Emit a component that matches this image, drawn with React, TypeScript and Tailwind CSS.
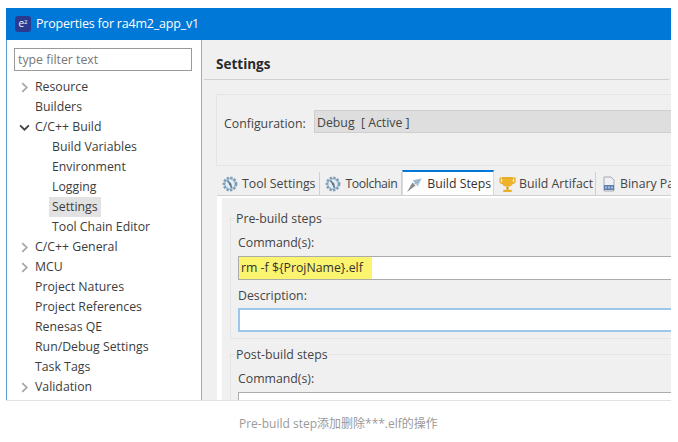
import React from "react";

function Chevron({ open }: { open?: boolean }) {
  return (
    <svg width="11" height="11" viewBox="0 0 10 10" className="shrink-0">
      {open ? (
        <path d="M1 3 L5 7 L9 3" fill="none" stroke="#404040" strokeWidth="1.6" />
      ) : (
        <path d="M3 1 L7 5 L3 9" fill="none" stroke="#a6a6a6" strokeWidth="1.6" />
      )}
    </svg>
  );
}

const tree: { label: string; level: number; arrow?: "open" | "closed"; selected?: boolean }[] = [
  { label: "Resource", level: 0, arrow: "closed" },
  { label: "Builders", level: 0 },
  { label: "C/C++ Build", level: 0, arrow: "open" },
  { label: "Build Variables", level: 1 },
  { label: "Environment", level: 1 },
  { label: "Logging", level: 1 },
  { label: "Settings", level: 1, selected: true },
  { label: "Tool Chain Editor", level: 1 },
  { label: "C/C++ General", level: 0, arrow: "closed" },
  { label: "MCU", level: 0, arrow: "closed" },
  { label: "Project Natures", level: 0 },
  { label: "Project References", level: 0 },
  { label: "Renesas QE", level: 0 },
  { label: "Run/Debug Settings", level: 0 },
  { label: "Task Tags", level: 0 },
  { label: "Validation", level: 0, arrow: "closed" },
];

function Gear() {
  return (
    <svg width="16" height="16" viewBox="0 0 16 16" className="shrink-0">
      <circle cx="8" cy="8" r="6.2" fill="#a9c4d8" stroke="#7f9db5" strokeWidth="2.4" strokeDasharray="2.2 1.4" />
      <circle cx="8" cy="8" r="4.4" fill="#e6edf2" />
      <path d="M5.5 4.5 L8.5 8.5 L9.5 12" fill="none" stroke="#6b7f92" strokeWidth="1.8" />
      <circle cx="8" cy="8" r="1.2" fill="#5f7487" />
    </svg>
  );
}

function Tab({ icon, label, active, last, spacing }: { icon: React.ReactNode; label: string; active?: boolean; last?: boolean; spacing: string }) {
  return active ? (
    <div className={`flex items-center h-[25px] pt-[1px] bg-white border-t-2 border-t-[#0078d7] border-x border-x-[#d9d9d9] text-[#333] ${spacing}`}>
      {icon}
      <span>{label}</span>
    </div>
  ) : (
    <div className={`flex items-center h-[23px] pt-[1px] text-[#444] ${spacing} ${last ? "" : "border-r border-[#d0d0d0]"}`}>
      {icon}
      <span>{label}</span>
    </div>
  );
}

function Legend({ children }: { children: React.ReactNode }) {
  return <div className="absolute -top-[9px] left-[4px] px-[1px] bg-[#f0f0f0] leading-[17px] text-[#444]">{children}</div>;
}

export default function App() {
  return (
    <div
      className="w-[678px] h-[442px] bg-white flex flex-col overflow-hidden text-[12.3px] text-[#3c3c3c]"
      style={{ fontFamily: '"Open Sans", "Noto Sans CJK SC", sans-serif' }}
    >
      <div className="ml-[6px] mt-[8px] w-[665px] h-[393px] flex flex-col overflow-hidden border-b border-b-[#e2e2e2]">
        {/* Title bar */}
        <div className="h-[32px] shrink-0 bg-[#0078d7] flex items-center pl-[9px] gap-[5px] text-white text-[12.5px] tracking-[-0.2px]">
          <div className="w-[16px] h-[16px] shrink-0 rounded-[3px] bg-[#2b3a8f] text-white text-[10px] leading-[14px] text-center tracking-normal">
            e<sup className="text-[6px]">2</sup>
          </div>
          <span>Properties for ra4m2_app_v1</span>
        </div>

        <div className="flex-1 flex min-h-0">
          {/* Left tree */}
          <div className="w-[196px] shrink-0 bg-white border-l border-l-[#5a9bd0] border-r border-r-[#a8a8a8] pt-[8px] pl-[7px] pr-[9px]">
            <div className="h-[23px] border border-[#9a9a9a] flex items-center pl-[3px] pt-[2px] text-[#777]">type filter text</div>
            <div className="mt-[6px]">
              {tree.map((t) => (
                <div key={t.label} className="h-[20px] flex items-center text-[#3c3c3c]">
                  <div className="w-[21px] flex justify-center shrink-0">
                    {t.arrow && <Chevron open={t.arrow === "open"} />}
                  </div>
                  {t.level === 1 ? (
                    <div className={`ml-[14px] px-[3px] h-[20px] leading-[20px] ${t.selected ? "bg-[#e2e2e2]" : ""}`}>{t.label}</div>
                  ) : (
                    <div className="leading-[20px]">{t.label}</div>
                  )}
                </div>
              ))}
            </div>
          </div>

          {/* Right */}
          <div className="flex-1 min-w-0 bg-[#f0f0f0] flex flex-col overflow-hidden">
            <div className="h-[40px] shrink-0 mx-[2px] border-b border-[#d0d0d0] flex items-center pl-[12px] pt-[9px] font-bold text-[13.5px] text-[#2a2a2a]">Settings</div>
            <div className="ml-[14px] mt-[14px] h-[72px] shrink-0 border border-[#e4e4e4] border-r-0 flex items-start pt-[15px] pl-[7px]">
              <div className="w-[90px] h-[24px] pt-[2px] leading-[24px] text-[#444]">Configuration:</div>
              <div className="flex-1 h-[23px] bg-[#dedede] border border-[#cfcfcf] border-r-0 pl-[2px] pt-[1px] leading-[21px] text-[#444]">Debug&nbsp; [ Active ]</div>
            </div>

            {/* Tabs */}
            <div className="ml-[15px] mt-[5px] shrink-0 flex items-end whitespace-nowrap h-[25px] border-b border-b-[#d0d0d0]">
              <Tab spacing="pl-[5px] gap-[4px] pr-[4px]" icon={<Gear />} label="Tool Settings" />
              <Tab spacing="pl-[5px] gap-[4px] pr-[4px] tracking-[-0.42px]" icon={<Gear />} label="Toolchain" />
              <Tab
                active
                spacing="pl-[3px] gap-[4px] pr-[2px]"
                label="Build Steps"
                icon={
                  <svg width="17" height="17" viewBox="0 0 16 16" className="shrink-0">
                    <path d="M1 15 L6 6 L9 9 Z" fill="#8c8c8c" />
                    <path d="M6 4 L15 2 L11 10 Z" fill="#b4cadb" />
                    <path d="M8 5 L13 4 M8 7 L12 6" stroke="#7fa0b8" strokeWidth="0.8" />
                  </svg>
                }
              />
              <Tab
                spacing="pl-[5px] gap-[3px] pr-[2px]"
                label="Build Artifact"
                icon={
                  <svg width="17" height="17" viewBox="0 0 16 16" className="shrink-0">
                    <path d="M3 1 H13 V6 Q13 10 8 10 Q3 10 3 6 Z" fill="#eeb32a" />
                    <path d="M1 2 H15 V5 Q15 7 12 7 M4 7 Q1 7 1 5 V2" fill="none" stroke="#e8ab24" strokeWidth="1.3" />
                    <rect x="7" y="10" width="2" height="3" fill="#d9991b" />
                    <rect x="4" y="13" width="8" height="2" fill="#e8ab24" />
                  </svg>
                }
              />
              <Tab
                last
                spacing="pl-[5px] gap-[3px] pr-[2px]"
                label="Binary Pa"
                icon={
                  <svg width="16" height="16" viewBox="0 0 16 16" className="shrink-0">
                    <path d="M3 1 H10 L13 4 V15 H3 Z" fill="#eef0f4" stroke="#a7a9b4" />
                    <rect x="3" y="9" width="10" height="5" fill="#5b7fae" />
                    <path d="M5 10.5 V12.5 M8 10.5 V12.5 M11 10.5 V12.5" stroke="#fff" strokeWidth="1" />
                  </svg>
                }
              />
            </div>

            {/* Tab body */}
            <div className="ml-[15px] flex-1 min-h-0 border-l-[5px] border-l-white border-t-[2px] border-t-white pl-[8px] pt-[20px]">
              <div className="relative h-[121px] border border-[#e4e4e4] border-r-0 pl-[7px] pt-[15px]">
                <Legend>Pre-build steps</Legend>
                <div className="h-[18px] leading-[18px] text-[#444]">Command(s):</div>
                <div className="mt-[4px] h-[24px] bg-white border border-[#ababab] border-r-0 flex">
                  <div className="w-[133px] h-full bg-[#fbf46e] pl-[2px] leading-[22px] text-[#333]">{"rm -f ${ProjName}.elf"}</div>
                </div>
                <div className="mt-[7px] h-[18px] leading-[18px] text-[#444]">Description:</div>
                <div className="mt-[3px] h-[24px] bg-white border-2 border-[#9cc6ea] border-r-0" />
              </div>
              <div className="relative mt-[15px] h-[60px] border border-[#e4e4e4] border-r-0 pl-[7px] pt-[15px]">
                <Legend>Post-build steps</Legend>
                <div className="h-[18px] leading-[18px] text-[#444]">Command(s):</div>
                <div className="mt-[4px] h-[24px] bg-white border border-[#ababab] border-r-0" />
              </div>
            </div>
          </div>
        </div>
      </div>

      <div className="h-[41px] pl-[239px] pt-[15px] text-[12px] leading-[16px] text-[#9a9a9a]">Pre-build step添加删除***.elf的操作</div>
    </div>
  );
}
